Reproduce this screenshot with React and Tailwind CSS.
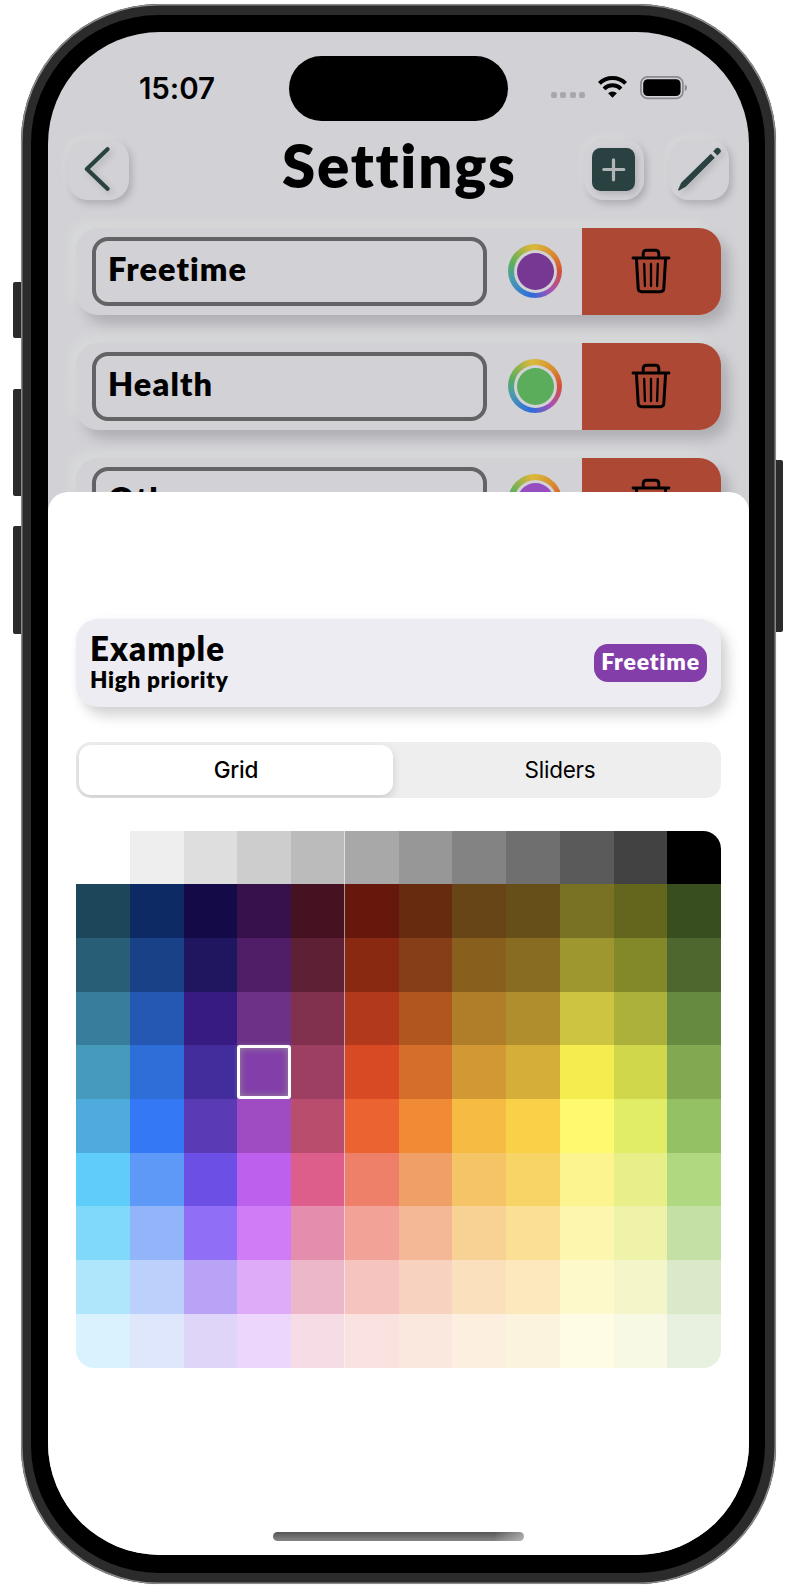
import React from "react";

const GRID = [
  ["#ffffff", "#eeeeee", "#dedede", "#cdcdcd", "#bbbbbb", "#a8a8a8", "#979797", "#838383", "#6f6f6f", "#5a5a5a", "#424242", "#000000"],
  ["#1c465a", "#0d2a64", "#150a48", "#37124a", "#461222", "#65180b", "#672b10", "#674516", "#674f19", "#797224", "#63661d", "#384e1e"],
  ["#285f76", "#194187", "#20155f", "#501e66", "#5e2034", "#8a2912", "#853e18", "#895f1e", "#886c21", "#9e962f", "#838829", "#4e672e"],
  ["#387e9c", "#2458b3", "#371b82", "#6d3288", "#81314d", "#b2391c", "#b05720", "#b07e29", "#b08e2d", "#cdc441", "#abb13a", "#678a41"],
  ["#469bbd", "#2e6ed8", "#432c9c", "#833ea9", "#9d3f62", "#d84a23", "#d56e2b", "#d29834", "#d4ae39", "#f5ec4f", "#d0d74b", "#82a852"],
  ["#4eabdb", "#3478f6", "#5b3bb5", "#9f4bc2", "#b84d6e", "#ec6332", "#f08a35", "#f5bb43", "#f8d148", "#fef96f", "#e2ed67", "#94c164"],
  ["#5ecdfa", "#5e99f8", "#6c4fe5", "#be60ee", "#dd5e8a", "#ee806a", "#f09f67", "#f5c466", "#f8d467", "#fcf48e", "#e9ef88", "#afd880"],
  ["#80d9f8", "#91b5f8", "#906ef6", "#cf7cf6", "#e48dad", "#f2a297", "#f4b897", "#f8d295", "#fadf95", "#fdf6ae", "#eff2a9", "#c5e0a5"],
  ["#b0e6fb", "#bbd0fb", "#b9a3f6", "#deabf8", "#edb7ca", "#f5c4bf", "#f7d2be", "#fae0bd", "#fce8bc", "#fdf9cb", "#f4f6ca", "#dae9c7"],
  ["#daf2fd", "#dee7fc", "#ded5f9", "#ecd6fc", "#f5dce5", "#fae2e0", "#fae8df", "#fcefdf", "#fcf3df", "#fefce5", "#f8f9e4", "#e8f0df"],
];

const ROWS = [
  { name: "Freetime", color: "#763892" },
  { name: "Health", color: "#5bad5b" },
  { name: "Other", color: "#954dbf" },
];

function Wifi() {
  return (
    <svg width="29" height="22" viewBox="0 0 29 22" fill="none" stroke="#000" strokeWidth="3.9">
      <path d="M1.4 7.4A18.6 18.6 0 0 1 27.6 7.4" />
      <path d="M6 12.8A12 12 0 0 1 23 12.8" />
      <path d="M14.5 21.8 10.1 17.3A6 6 0 0 1 18.9 17.3Z" fill="#000" stroke="none" />
    </svg>
  );
}

function Battery() {
  return (
    <svg width="48" height="24" viewBox="0 0 48 24">
      <rect x="0.9" y="0.9" width="42" height="21.4" rx="6.6" fill="none" stroke="#8b8a8e" strokeWidth="1.7" />
      <rect x="3.2" y="3.2" width="37.4" height="16.8" rx="4.6" fill="#000" />
      <path d="M44.8 8.4c3 1 3 5.4 0 6.6z" fill="#8b8a8e" />
    </svg>
  );
}

function Trash() {
  return (
    <svg width="40" height="46" viewBox="0 0 40 46" fill="none" stroke="#000" strokeLinecap="round" strokeLinejoin="round">
      <path d="M2 10H38" strokeWidth="2.8" />
      <path d="M12.2 9V5.6Q12.2 2.2 15.6 2.2H24.4Q27.8 2.2 27.8 5.6V9" strokeWidth="2.9" />
      <path d="M5.4 10.5 7.2 40.4Q7.5 43.7 10.7 43.7H29.3Q32.5 43.7 32.8 40.4L34.6 10.5" strokeWidth="3" />
      <path d="M13.2 16 13.9 38M20 16V38M26.8 16 26.1 38" strokeWidth="2.3" />
    </svg>
  );
}

function RaisedButton({ children }) {
  return (
    <div className="flex size-[60.5px] items-center justify-center rounded-[20px] bg-[#d2d1d6] shadow-[3px_4px_7px_rgba(0,0,0,0.17),-3px_-3px_6px_rgba(218,218,218,0.8)]">
      {children}
    </div>
  );
}

function StatusBar() {
  return (
    <div className="flex h-[89px] items-start pt-6">
      <div className="w-[241px] pl-[91px] pt-[16px] font-['Inter',sans-serif] text-[29.5px] leading-[33px] font-semibold tracking-[-0.1px]">15:07</div>
      <div className="h-[65px] w-[219px] rounded-full bg-black" />
      <div className="flex items-end gap-[3.4px] pl-[43px] pt-[36px]">
        {[0, 1, 2, 3].map((i) => (
          <span key={i} className="size-[6px] rounded-[2px] bg-[#a8a7ac]" />
        ))}
      </div>
      <div className="pl-[13px] pt-5"><Wifi /></div>
      <div className="pl-[13px] pt-5"><Battery /></div>
    </div>
  );
}

function Header() {
  return (
    <div className="flex h-[106.7px] items-start justify-between pl-5 pr-5">
      <div className="flex w-[147px] pt-[18px]">
        <RaisedButton>
          <svg width="28" height="46" viewBox="0 0 28 46" fill="none" stroke="#2a4142" strokeWidth="4.2" strokeLinecap="round" strokeLinejoin="round" className="drop-shadow-[3px_3px_3px_rgba(0,0,0,0.15)]">
            <path d="M23.5 3.2 2.9 23 23.5 42.8" />
          </svg>
        </RaisedButton>
      </div>
      <h1 className="-mx-5 pt-[8px] text-[60px] leading-[72px] font-extrabold tracking-[1.8px]">Settings</h1>
      <div className="flex gap-[24.5px] pt-[18px]">
        <RaisedButton>
          <svg width="43" height="43" viewBox="0 0 43 43" className="drop-shadow-[3px_3px_3px_rgba(0,0,0,0.15)]">
            <rect width="43" height="43" rx="8.5" fill="#2a4142" />
            <path d="M11.8 21.5h20M21.5 11.8v20" stroke="#b2b5b8" strokeWidth="3.2" strokeLinecap="round" />
          </svg>
        </RaisedButton>
        <RaisedButton>
          <svg width="46" height="46" viewBox="0 0 46 46" fill="#2a4142" className="drop-shadow-[3px_3px_3px_rgba(0,0,0,0.15)]">
            <path d="M2.2 43.6 4.6 38Q5 37 5.7 36.3L34.8 7.8 38.8 11.8 10 40.4Q9.2 41.2 8.2 41.6L3.2 44.4Q1.9 44.8 2.2 43.6Z" />
            <path d="M37.2 5.3 39.9 2.5Q41.8 1 43.9 2.9 45.7 5 44.1 6.8L41.3 9.4Z" />
          </svg>
        </RaisedButton>
      </div>
    </div>
  );
}

function CategoryRow({ name, color }) {
  return (
    <div className="flex h-[87.3px] items-center overflow-visible rounded-[22px] bg-[#d2d1d6] pl-4 shadow-[8px_9px_13px_rgba(0,0,0,0.17),-7px_-7px_12px_rgba(216,220,218,0.75)]">
      <div className="flex h-[69px] w-[395px] items-center rounded-[16px] border-4 border-[#636365] pb-[4px] pl-[12px] text-[32.5px] leading-[40px] font-extrabold tracking-[1.1px]">
        {name}
      </div>
      <div className="ml-[21px] flex size-[54px] items-center justify-center rounded-full bg-[conic-gradient(#d9b63c_0deg,#d98e30_45deg,#d4503a_90deg,#a850b4_140deg,#2e6cdc_188deg,#4a9ab0_250deg,#5bb05a_290deg,#d9b63c_350deg)]">
        <div className="flex size-[43px] items-center justify-center rounded-full bg-[#d2d1d6]">
          <div className="size-[37px] rounded-full" style={{ backgroundColor: color }} />
        </div>
      </div>
      <div className="ml-auto flex h-full w-[139.5px] items-center justify-center rounded-r-[22px] bg-[#ac4833]">
        <Trash />
      </div>
    </div>
  );
}

function ColorGrid() {
  return (
    <div className="relative mt-[33px] flex h-[537px] flex-col overflow-hidden rounded-[18px]">
      {GRID.map((row, r) => (
        <div key={r} className="flex flex-1">
          {row.map((c, i) => (
            <div key={i} className="flex-1" style={{ backgroundColor: c }}>
              {r === 4 && i === 3 && (
                <div className="size-full rounded-[3px] border-[3px] border-white shadow-[inset_0_0_7px_rgba(150,150,150,0.9),0_0_4px_rgba(160,160,160,0.4)]" />
              )}
            </div>
          ))}
        </div>
      ))}
      <div className="absolute top-0 left-[268px] h-full w-px bg-white/55" />
    </div>
  );
}

function Sheet() {
  return (
    <div className="absolute inset-x-0 bottom-0 flex h-[1063px] flex-col rounded-t-[20px] bg-white px-7 pt-[127px]">
      <div className="flex h-[88px] items-center justify-between rounded-[22px] bg-[#edecf3] pr-[14px] pl-[14px] shadow-[7px_9px_13px_rgba(0,0,0,0.17),0_0_8px_rgba(0,0,0,0.04)]">
        <div className="pb-px font-extrabold">
          <div className="text-[33px] leading-[34px] tracking-[1.1px]">Example</div>
          <div className="text-[22.5px] leading-[29px] tracking-[0.7px]">High priority</div>
        </div>
        <div className="flex h-[38.5px] w-[113px] items-center justify-center rounded-[14px] bg-[#833ea9] pb-[3px] text-[23px] font-extrabold tracking-[0.8px] text-white">
          Freetime
        </div>
      </div>
      <div className="mt-[35px] flex h-[55.5px] overflow-hidden rounded-[15px] bg-[#eeeeee] p-[3px] font-['Inter',sans-serif] text-[22.5px] tracking-[-0.25px]">
        <div className="flex w-[314px] items-center justify-center rounded-[12px] bg-white font-medium shadow-[0_4px_10px_rgba(0,0,0,0.14)]">Grid</div>
        <div className="flex flex-1 items-center justify-center pl-[9px]">Sliders</div>
      </div>
      <ColorGrid />
      <div className="mt-auto flex justify-center pb-[14px]">
        <div className="h-[9px] w-[251px] rounded-full bg-[linear-gradient(90deg,transparent_88%,rgba(255,255,255,0.4)),linear-gradient(#555755,#858585)]" />
      </div>
    </div>
  );
}

export default function App() {
  return (
    <div className="flex h-[1588px] w-[795px] justify-start bg-white pt-1 pl-[21px] font-['Lato',sans-serif] text-black [font-variant-ligatures:none]">
      <div className="relative h-[1580px] w-[755px]">
        <div className="absolute top-[278px] -left-[8px] h-[56px] w-5 rounded-[2px] bg-[#2b2b2b]" />
        <div className="absolute top-[385px] -left-[8px] h-[107px] w-5 rounded-[2px] bg-[#2b2b2b]" />
        <div className="absolute top-[522px] -left-[8px] h-[108px] w-5 rounded-[2px] bg-[#2b2b2b]" />
        <div className="absolute top-[456px] -right-[7px] h-[172px] w-5 rounded-[2px] bg-[#2b2b2b]" />
        <div className="relative h-full rounded-[138px] bg-[#2b2b2b] pt-[11px] pr-[11px] pb-[11px] pl-[10px] shadow-[inset_0_0_0_1.5px_#8a8a8a,0_0_1px_rgba(0,0,0,0.3)]">
          <div className="h-full rounded-[128px] bg-black pt-[17px] pr-[16px] pb-[18px] pl-[17px]">
            <div className="relative h-full overflow-hidden rounded-[112px] bg-[#d2d1d6]">
              <StatusBar />
              <Header />
              <div className="flex flex-col gap-[27.7px] px-7">
                {ROWS.map((row) => (
                  <CategoryRow key={row.name} {...row} />
                ))}
              </div>
              <Sheet />
            </div>
          </div>
        </div>
      </div>
    </div>
  );
}
